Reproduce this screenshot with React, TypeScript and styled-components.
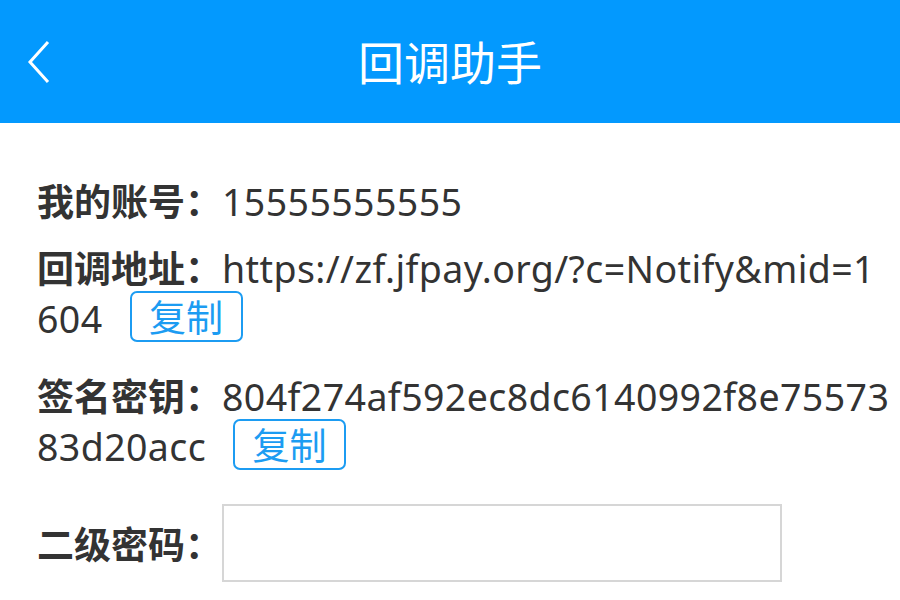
import React from "react";
import styled, { createGlobalStyle } from "styled-components";

const Global = createGlobalStyle`
  html, body { margin: 0; padding: 0; background: #ffffff; }
  body { font-family: "Noto Sans", "Noto Sans CJK SC", sans-serif; }
`;

const Page = styled.div`
  width: 900px;
  height: 600px;
  overflow: hidden;
  background: #fff;
`;

const Header = styled.header`
  height: 123px;
  background: #0399fe;
  display: grid;
  grid-template-columns: 100px 1fr 100px;
  align-items: center;
  color: #fff;
`;

const Back = styled.button`
  border: 0;
  background: transparent;
  padding: 0 0 0 26px;
  display: flex;
  align-items: center;
  height: 60px;
  cursor: pointer;
`;

const Title = styled.h1`
  margin: 0;
  text-align: center;
  font-family: "Noto Sans CJK SC", sans-serif;
  font-weight: 400;
  font-size: 46px;
  line-height: 1;
  padding-bottom: 4px;
`;

const Content = styled.main`
  padding: 52px 6px 0 37px;
  display: flex;
  flex-direction: column;
`;

const Row = styled.p<{ $gap: number }>`
  margin: ${(p) => p.$gap}px 0 0;
  font-size: 37px;
  line-height: 50px;
  color: #333;
  word-break: break-all;
  font-family: "Noto Sans", "Noto Sans CJK SC", sans-serif;
`;

const Label = styled.b`
  font-family: "Noto Sans CJK SC", sans-serif;
  font-weight: 700;
  color: #333;
`;

const Value = styled.span`
  color: #333;
  font-size: 37.5px;
  letter-spacing: 0.4px;
`;

const CopyBtn = styled.button`
  display: inline-block;
  vertical-align: top;
  box-sizing: border-box;
  margin: -3px 0 0 27px;
  height: 51px;
  width: 113px;
  padding: 0;
  border: 2px solid #1c9cf2;
  border-radius: 7px;
  background: #fff;
  color: #1c9cf2;
  font-family: "Noto Sans CJK SC", sans-serif;
  font-size: 37px;
  line-height: 45px;
  cursor: pointer;
`;

const FieldRow = styled.div`
  margin-top: 32px;
  display: flex;
  align-items: center;
  font-size: 37px;
`;

const FieldLabel = styled(Label)`
  width: 185px;
  flex: none;
`;

const Input = styled.input`
  width: 560px;
  height: 78px;
  box-sizing: border-box;
  border: 2px solid #d6d6d6;
  border-radius: 0;
  font-size: 30px;
  padding: 0 10px;
  outline: none;
`;

export default function App() {
  return (
    <Page>
      <Global />
      <Header>
        <Back aria-label="返回">
          <svg width="26" height="44" viewBox="0 0 26 44">
            <polyline points="22,2 4,22 22,42" fill="none" stroke="#fff" strokeWidth="3" />
          </svg>
        </Back>
        <Title>回调助手</Title>
        <span />
      </Header>
      <Content>
        <Row $gap={0}>
          <Label>我的账号：</Label>
          <Value>15555555555</Value>
        </Row>
        <Row $gap={15}>
          <Label>回调地址：</Label>
          <Value>https://zf.jfpay.org/?c=Notify&amp;mid=1604</Value>
          <CopyBtn>复制</CopyBtn>
        </Row>
        <Row $gap={26}>
          <Label>签名密钥：</Label>
          <Value>804f274af592ec8dc6140992f8e7557383d20acc</Value>
          <CopyBtn>复制</CopyBtn>
        </Row>
        <FieldRow>
          <FieldLabel>二级密码：</FieldLabel>
          <Input type="password" />
        </FieldRow>
      </Content>
    </Page>
  );
}
